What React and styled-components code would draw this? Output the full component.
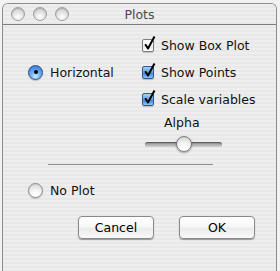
import styled, { createGlobalStyle } from "styled-components";

const GlobalStyle = createGlobalStyle`
  html, body {
    margin: 0;
    padding: 0;
    background: #f2f2f2;
    font-family: "DejaVu Sans", "Lucida Grande", sans-serif;
  }
  #root {
    width: 280px;
    height: 271px;
    overflow: hidden;
  }
`;

const pinstripe = `repeating-linear-gradient(
  to bottom,
  #eeeeee 0px,
  #eeeeee 2px,
  #e8e8e8 2px,
  #e8e8e8 4px
)`;

const Window = styled.div`
  margin: 3px 0 0 2px;
  width: 273px;
  height: 268px;
  border: 1px solid #8c8c8c;
  border-bottom: none;
  border-radius: 6px 6px 0 0;
  background: ${pinstripe};
  display: flex;
  flex-direction: column;
  overflow: hidden;
`;

const TitleBar = styled.div`
  height: 20px;
  border-bottom: 1px solid #7c7c7c;
  display: flex;
  align-items: center;
  padding-left: 8px;
  position: relative;
  background: ${pinstripe};
`;

const Lights = styled.div`
  display: flex;
  gap: 8px;
`;

const Light = styled.span`
  width: 12px;
  height: 12px;
  border-radius: 50%;
  border: 1px solid #9c9c9c;
  background: radial-gradient(circle at 50% 75%, #ffffff 0%, #e4e4e4 45%, #bdbdbd 100%);
  box-shadow: inset 0 1px 1px rgba(0, 0, 0, 0.15);
`;

const Title = styled.div`
  position: absolute;
  left: 0;
  right: 0;
  text-align: center;
  font-size: 12.5px;
  color: #4a4a4a;
  pointer-events: none;
`;

const Content = styled.div`
  padding: 11px 21px 0 25px;
  display: flex;
  flex-direction: column;
`;

const TopSection = styled.div`
  display: flex;
`;

const LeftColumn = styled.div`
  width: 114px;
  flex: none;
  padding-top: 27px;
`;

const RightColumn = styled.div`
  flex: none;
  display: flex;
  flex-direction: column;
`;

const Row = styled.label`
  height: 18px;
  display: flex;
  align-items: center;
  gap: 7px;
  white-space: nowrap;
  font-size: 12.5px;
  color: #111;
  margin-top: ${(p) => p.$before || 0}px;
  margin-bottom: ${(p) => p.$after || 0}px;
`;

const RadioCircle = styled.span`
  width: 13px;
  height: 13px;
  flex: none;
  border-radius: 50%;
  display: flex;
  align-items: center;
  justify-content: center;
  border: 1px solid ${(p) => (p.$on ? "#2c4f8c" : "#8a8a8a")};
  background: ${(p) =>
    p.$on
      ? "radial-gradient(circle at 50% 80%, #cfe8ff 0%, #6fb0f0 40%, #2a6cd0 100%)"
      : "radial-gradient(circle at 50% 80%, #ffffff 0%, #f2f2f2 45%, #c8c8c8 100%)"};
  box-shadow: 0 1px 1px rgba(0, 0, 0, 0.2);
  &::after {
    content: "";
    display: ${(p) => (p.$on ? "block" : "none")};
    width: 4px;
    height: 4px;
    border-radius: 50%;
    background: #000;
  }
`;

const BoxWrap = styled.span`
  position: relative;
  width: 12px;
  height: 13px;
  flex: none;
`;

const Box = styled.span`
  display: block;
  width: 10px;
  height: 11px;
  border: 1px solid ${(p) => (p.$blue ? "#34578f" : "#7c7c7c")};
  border-radius: 2px;
  background: ${(p) =>
    p.$blue
      ? "linear-gradient(to bottom, #a9d2f7 0%, #5a9ee8 50%, #3b82de 55%, #8cc4f5 100%)"
      : "linear-gradient(to bottom, #ffffff 0%, #f4f4f4 50%, #e6e6e6 55%, #fbfbfb 100%)"};
  box-shadow: 0 1px 1px rgba(0, 0, 0, 0.2);
`;

const Check = styled.svg`
  position: absolute;
  left: 1px;
  top: -4px;
`;

const CheckBox = ({ blue }) => (
  <BoxWrap>
    <Box $blue={blue} />
    <Check width="13" height="16" viewBox="0 0 13 16">
      <path d="M2.2 9.2 L5 13.5 L11.5 1.5" fill="none" stroke="#000" strokeWidth="2" strokeLinejoin="round" />
    </Check>
  </BoxWrap>
);

const AlphaLabel = styled.div`
  height: 18px;
  line-height: 18px;
  padding-left: 22px;
  margin-top: 6px;
  font-size: 12.5px;
  color: #111;
`;

const SliderRow = styled.div`
  height: 18px;
  margin-left: 3px;
  margin-top: 3px;
  width: 77px;
  position: relative;
  display: flex;
  align-items: center;
`;

const Track = styled.div`
  width: 100%;
  height: 5px;
  border-radius: 3px;
  background: linear-gradient(to bottom, #7a7a7a, #b8b8b8 60%, #d0d0d0);
  box-shadow: inset 0 1px 1px rgba(0, 0, 0, 0.3);
`;

const Knob = styled.div`
  position: absolute;
  left: ${(p) => p.$pos}px;
  top: 1px;
  width: 14px;
  height: 14px;
  border-radius: 50%;
  border: 1px solid #7a7a7a;
  background: radial-gradient(circle at 50% 80%, #ffffff 0%, #f3f3f3 45%, #c9c9c9 100%);
  box-shadow: 0 1px 2px rgba(0, 0, 0, 0.35);
`;

const Separator = styled.div`
  margin: 11px 0 0 20px;
  width: 165px;
  height: 1px;
  background: #8e8e8e;
`;

const Buttons = styled.div`
  display: flex;
  justify-content: flex-end;
  gap: 25px;
  margin-top: 17px;
`;

const Button = styled.button`
  width: 76px;
  height: 23px;
  padding: 0;
  border: 1px solid #8a8a8a;
  border-radius: 4px;
  font-family: "DejaVu Sans", "Lucida Grande", sans-serif;
  font-size: 12.5px;
  color: #000;
  background: linear-gradient(to bottom, #ffffff 0%, #f7f7f7 45%, #ebebeb 55%, #f9f9f9 100%);
  box-shadow: 0 1px 1px rgba(0, 0, 0, 0.35);
`;

export default function App() {
  return (
    <>
      <GlobalStyle />
      <Window>
        <TitleBar>
          <Lights>
            <Light />
            <Light />
            <Light />
          </Lights>
          <Title>Plots</Title>
        </TitleBar>
        <Content>
          <TopSection>
            <LeftColumn>
              <Row>
                <RadioCircle $on />
                Horizontal
              </Row>
            </LeftColumn>
            <RightColumn>
              <Row $after={9}>
                <CheckBox />
                Show Box Plot
              </Row>
              <Row $after={9}>
                <CheckBox blue />
                Show Points
              </Row>
              <Row>
                <CheckBox blue />
                Scale variables
              </Row>
              <AlphaLabel>Alpha</AlphaLabel>
              <SliderRow>
                <Track />
                <Knob $pos={31} />
              </SliderRow>
            </RightColumn>
          </TopSection>
          <Separator />
          <Row $before={16}>
            <RadioCircle />
            No Plot
          </Row>
          <Buttons>
            <Button>Cancel</Button>
            <Button>OK</Button>
          </Buttons>
        </Content>
      </Window>
    </>
  );
}
